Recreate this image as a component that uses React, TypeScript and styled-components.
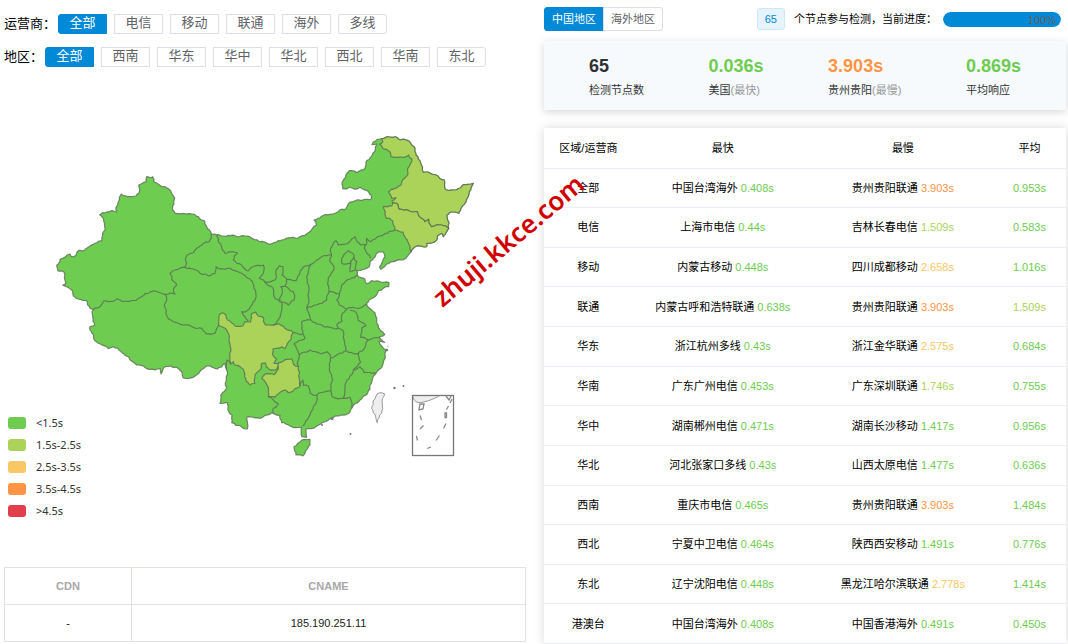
import React, { useState } from "react";
import styled, { createGlobalStyle } from "styled-components";

const GREEN = "#6ecc51";
const LIME = "#abd35a";
const YELLOW = "#f9c766";
const ORANGE = "#ff9544";
const RED = "#e13f4c";
const BLUE = "#0089d6";

const GlobalStyle = createGlobalStyle`
  * { box-sizing: border-box; }
  body {
    margin: 0;
    background: #fff;
    color: #111;
    font: 11px/16px "Liberation Sans", "Noto Sans CJK SC", sans-serif;
  }
  button { font-family: inherit; cursor: pointer; }
`;

const Page = styled.main`
  position: relative;
  display: grid;
  grid-template-columns: minmax(0, 1fr) minmax(0, 1fr);
  gap: 18px;
  padding: 0 2px 0 4px;
  overflow: hidden;
`;

const Column = styled.section`
  display: flex;
  flex-direction: column;
  min-width: 0;
`;

/* ---------- filters ---------- */

const Filters = styled.div`
  display: flex;
  flex-direction: column;
  gap: 13px;
  padding-top: 14px;
`;

const FilterRow = styled.div`
  display: flex;
  align-items: center;
  height: 20px;
`;

const FilterLabel = styled.span`
  margin-right: 2px;
  font-size: 13px;
  line-height: 20px;
  color: #000;
`;

const FilterOptions = styled.div`
  display: flex;
  gap: 7px;
`;

const FilterButton = styled.button<{ $active: boolean }>`
  width: 49px;
  height: 20px;
  padding: 0 0 3px;
  border: 1px solid ${(p) => (p.$active ? BLUE : "#dcdfe6")};
  background: ${(p) => (p.$active ? BLUE : "#fff")};
  color: ${(p) => (p.$active ? "#fff" : "#606266")};
  font-size: 13px;
  line-height: 15px;
  &:first-child { border-radius: 3px 0 0 3px; }
  &:last-child { border-radius: 0 3px 3px 0; }
`;

function Filter({ label, options }: { label: string; options: string[] }) {
  const [active, setActive] = useState(options[0]);
  return (
    <FilterRow role="group" aria-label={label}>
      <FilterLabel>{label}：</FilterLabel>
      <FilterOptions>
        {options.map((o) => (
          <FilterButton key={o} type="button" $active={o === active} onClick={() => setActive(o)}>
            {o}
          </FilterButton>
        ))}
      </FilterOptions>
    </FilterRow>
  );
}

/* ---------- map ---------- */

type Point = [number, number];

const parse = (s: string): Point[] => s.trim().split(/\s+/).map((p) => p.split(",").map(Number) as Point);

// Adds small bends to an edge; the result is the same in either direction,
// so neighbouring provinces keep a common border.
function bends(a: Point, b: Point, depth: number): Point[] {
  const len = Math.hypot(b[0] - a[0], b[1] - a[1]);
  if (depth === 0 || len < 3) return [b];
  const seed = Math.sin((a[0] + b[0]) * 12.9898 + (a[1] + b[1]) * 78.233) * 43758.5453;
  const r = seed - Math.floor(seed) - 0.5;
  const dir = a[0] < b[0] || (a[0] === b[0] && a[1] < b[1]) ? 1 : -1;
  const k = (dir * r * Math.min(2.4, len * 0.3)) / len;
  const m: Point = [(a[0] + b[0]) / 2 - (b[1] - a[1]) * k, (a[1] + b[1]) / 2 + (b[0] - a[0]) * k];
  return [...bends(a, m, depth - 1), ...bends(m, b, depth - 1)];
}

function trace(s: string, closed = false) {
  const pts = parse(s);
  if (closed) pts.push(pts[0]);
  const out: Point[] = [pts[0]];
  for (let i = 1; i < pts.length; i++) out.push(...bends(pts[i - 1], pts[i], 3));
  return "M" + out.map(([x, y]) => `${x.toFixed(1)} ${y.toFixed(1)}`).join("L") + (closed ? "Z" : "");
}

const NORTH_EAST =
  "381.7,138.7 395,136.7 400.7,140 409.3,141.3 415,148.3 416,155 423.3,172.3 436,175 444.3,180 445.3,189.3 456.7,190 463.3,184.7 473.3,183.3 469.3,191.7 466,201.7 458.7,213.3 453.3,212 446.7,215.3 448.7,228.7";
const JILIN_COAST =
  "448.7,228.7 446.7,231.7 443.3,236.7 441.7,233.3 437.3,236 436.7,240 426.7,243.3 426.7,246.7 417.3,245.7 410.7,252.3";

const MAINLAND = `
  93.3,310 90,308.3 86.7,300.7 80,299.3 73.3,296 72.7,290.7 66.7,286.7 62.7,285.3 66,283.3 64,272 58,271 56.7,265.3
  60,259.3 70,254 71.3,256.7 76,255.3 78.7,250.3 84.7,250 96.7,242.7 102,240.7 102.7,235.3 105.3,229.3 103.3,218.3
  99.7,214.7 112.7,210.7 116.7,212 116,207.3 121.3,194 125,195.7 136,196 138.7,193.3 138.7,185 146,182 146.7,176.7
  152.7,176.7 154,182 161.7,186.7 168.7,189 174.7,198 172.7,210 174.7,212.7 191.7,214 204.7,221 206.7,226.7 211.3,234
  216.7,234.7 230,235.7 246.7,236 260,241.7 269.3,244.3 281.7,240 300,236.7 308.3,232.7 316.7,225.3 314,220 330,214.3
  346,208.7 350,202.3 356.7,200 371.3,199 368.7,192 360,187.3 355,189.3 350,187.3 342.7,188.7 342,184 349.3,170.7
  356.7,172.7 365.3,168 366,161.7 375.3,150 376.7,144 372,144.7 373.3,142 ${NORTH_EAST} ${JILIN_COAST}
  401.7,260 391.7,261.7 380.7,269.3 379.5,267 385,256.7 383.3,252 378.3,252 375,257 370,261.7 369.3,266.7 356.7,270
  357.3,275 365,279.3 366.7,284 371.7,280.7 378.3,281 389,282.7 388.7,286.7 378.3,290.7 366.7,303.3 368.3,307.3
  375,312.7 376.7,318 380,330 384.7,334.3 379.3,337.3 384.7,342.3 379,341 386,350 385.3,356 382.7,365 376,373.3
  370,389.3 360,400 351.7,408.3 347.3,414 331.7,418.3 316.7,426 306,429 306.7,437.3 302,436.7 301.7,427.3 290,426
  281.7,422.7 280,415 271.7,412.7 263.3,416.7 246.7,417.3 247.3,429 240.7,426 231.7,422.7 232,415 228,410 227.3,402.7
  220,403.3 220.7,395 226.7,387.3 226.7,370 225,363.3 217.3,369 206.7,366 193.3,377.3 183.3,378 181.7,371.7
  176.7,367.3 165,366.7 161,374 160,368.3 150,369.3 136.7,365 128.3,356.7 113.3,346.7 108.3,348.7 94,339.3 90,326.7
  94.7,325.3 92.7,316.7 92,311.7`;

const HEILONGJIANG = `${NORTH_EAST} 441.7,225 436.7,224.7 431.3,226.7 428.7,219.3 424.7,221.7 420,217.3 417.3,211.7
  399.3,209.3 396.7,203.3 392.7,202.7 392,200.7 396,197.7 391.7,198.3 388.3,192 401,185 401.7,182.7 408,174
  407.7,168.3 412,159.3 408.7,155 404,157.3 391,156.7 390,151.7 382.7,148 379.3,144 382.7,142`;

const JILIN = `${JILIN_COAST} 407.3,240 403.3,232 395,230 392.7,220.7 386.7,218.3 383.3,206.7 391.7,206 392.7,202.7
  396.7,203.3 399.3,209.3 417.3,211.7 420,217.3 424.7,221.7 428.7,219.3 431.3,226.7 436.7,224.7 441.7,225`;

const SICHUAN = `222.7,312.7 226,315 227.3,320 235,326 242.7,326 245,321.7 250.7,322 252,313.3 255.7,312 258.3,316
  263.3,317.3 265.3,325 276.7,324 293.3,332.7 287.3,343.3 285,348.3 281.7,346.7 273.3,348.7 272.7,355 276.7,359.3
  274,363.3 278.7,364 275,370 268.3,368.3 265,362.7 261.7,363.3 259.3,370.7 255,376 255,383.3 250,385 246,380
  241.7,368.3 235,365 233.3,361.7 230.7,364 229.3,336.7 225,328.3 218.7,325 219.3,315`;

const GUIZHOU = `278.7,362.7 286.7,359.3 291.7,358.7 293.3,364 298.3,366.7 299.3,378.3 300,386 293.3,390.7 288.3,392.7
  285,390 278.3,394 275,397.3 268.3,396.7 268.3,387.3 261.7,378.3 265,374 274,374.7 278.3,369.3`;

const HAINAN = "301.7,440 310,439.3 310,445 302.7,456 296,455 294,446.7";
const TAIWAN = "379.3,392.7 384.7,394 381.7,413.3 377.3,422.7 375.5,416 371.7,408.3 373,401";

const BORDERS = [
  "93.3,310 99.3,307.3 103.3,301 113.3,301.3 117.3,298.7 122.7,301.7 140,297.7 145,293.3 156.7,291.3 165,294.3",
  "165,294.3 175,294.3 173.3,289.3 176.7,285 172,280 170,273.3 184.7,267.3 187.3,255 193.3,252.7 196.7,248.3 209.3,241.7 211.3,234",
  "184.7,267.3 193.3,269 200,273.3 210,276 215,273.3 216,266.7 223.3,269 230,268 240,272.7 252.7,281.7 256,295 249.3,309.3 241.7,311.7 245,316.7 248.3,321",
  "165,294.3 166.7,298.3 165,303.3 167.3,316.7 178.3,323.3 193.3,327.3 201.7,328.3 206.7,334 215,333.3 218.7,325",
  "230.7,364 227,360 226.7,370",
  "216.7,235 218.3,241.7 221.7,246.7 225,253.3 233.3,251.7 237.3,252.7 233.3,260 241.7,265 248.3,271 251.7,267.3 263.3,265 264,270 259.3,278.3 265,282.3 275,280 276,270 279.3,265.7 282.7,266.7 282,275 286.7,279.3 296,280.7 300,271.7 305,266 311,264.3 318.3,259.3 321.7,256.7 331.7,255",
  "286.7,279.3 285,286 280.7,286.7 282,294 279.3,298.3 280,301.7 275,298.3 271.7,286.7 265,282.3",
  "285,286 293.3,291.7 294,300 288.3,305 280.7,301.7 281,313.3 278.3,320 273.3,325",
  "311,264.3 306.7,276.7 309,288.3 306.7,308.3 310,318.3 321.7,325 338.3,328.3 343.3,331 345,345 346,350.7",
  "331.7,255 330,261.7 334,266.7 328.3,280 329,291.7 326.7,300 306.7,308.3",
  "331.7,255 330.7,248.3 336,240.7 338.3,245 350,241.7 355,236.7 360.7,245 366,245 366.7,238.3 370.7,241.7 380,236 395,230",
  "366,245 364.3,248 370.7,258.3",
  "341.7,258.3 348.3,250.7 354,255 352.7,259.3 350,263.3 341.7,263.3 341.7,258.3",
  "354,257.3 356.7,261.7 355.3,270 350,271.7 350.7,261.7",
  "357.3,275 350,279 341.7,285 339.3,294 336.7,300 339.3,305 346.7,309.3 353.3,307.3 361.7,307.3 366.7,304",
  "329,291.7 339.3,294",
  "346.7,309.3 341.7,315 342,321 336.7,325 338.3,328.3",
  "350,310 356.7,313.3 358,320 363.3,323 366,326 361.7,328.3 360.7,337.3 368.3,340 379.3,337.3",
  "368.3,340 363.3,350 358.3,353.3 351.7,352.7 346,350.7 338.3,354 330.7,358.3 327.3,351.7 320,353.3 310,350 299.3,355 298.3,366.7",
  "310,320 301.7,321.7 301.7,328.3 303,334 305,338.3 294,344 298.3,351.7 299.3,355",
  "293.3,332.7 303,334",
  "330.7,358.3 329.3,370 332.7,380 330.7,390.7 325,391.7 316.7,395 310,393.3 308.3,386 303.3,385.3 302.7,380 300,386",
  "316.7,395 316,403.3 310,415 302.7,426",
  "330.7,390.7 333.3,397.3 343.3,398.3 350,397.3 351.7,408.3",
  "343.3,398.3 345,386.7 353.3,370 360.7,362 358.3,353.3",
  "353.3,370 360,366.7 364,372.7 371.7,373.3 376,373.3",
  "268.3,396.7 278.3,404 273.3,408.3 273.3,413",
];

const SEA_MARKS = [
  "M420 404l4 0l-1 5l-4 1z",
  "M420 415.500l1.500 4.500",
  "M420 429l3.500-3.500",
  "M416.500 436l1 4.500",
  "M427 448.500l4-1.500",
  "M436 440.500l3.500-5",
  "M443.500 428.500l2.500-5",
  "M445 413v4.500h1.500v-4.500z",
  "M446.500 409.500l2-3.500",
  "M450 403l2-4",
  "M446 396l3 4l2-4",
];

const MapArea = styled.div`
  position: relative;
`;

const MapDrawing = styled.svg`
  display: block;
  width: 100%;
  height: auto;
`;

const Legend = styled.ul`
  position: absolute;
  left: 4px;
  bottom: 45px;
  margin: 0;
  padding: 0;
  list-style: none;
`;

const LegendItem = styled.li`
  display: flex;
  align-items: center;
  gap: 10px;
  color: #333;
  font: 11px/22px "Noto Sans", sans-serif;
`;

const Swatch = styled.i<{ $color: string }>`
  width: 18px;
  height: 12px;
  border-radius: 3px;
  background: ${(p) => p.$color};
`;

const legend: [string, string][] = [
  [GREEN, "<1.5s"],
  [LIME, "1.5s-2.5s"],
  [YELLOW, "2.5s-3.5s"],
  [ORANGE, "3.5s-4.5s"],
  [RED, ">4.5s"],
];

function ChinaMap() {
  return (
    <MapArea>
      <MapDrawing viewBox="4 67 522 500" role="img" aria-label="中国地区">
        <g stroke="#5a6e54" strokeOpacity="0.8" strokeWidth="1.200" strokeLinejoin="round">
          <path d={trace(MAINLAND, true)} fill={GREEN} />
          <path d={trace(HAINAN, true)} fill={GREEN} />
          {[HEILONGJIANG, JILIN, SICHUAN, GUIZHOU].map((shape, i) => (
            <path key={i} d={trace(shape, true)} fill={LIME} />
          ))}
          {BORDERS.map((line, i) => (
            <path key={i} d={trace(line)} fill="none" />
          ))}
        </g>
        <path d={trace(TAIWAN, true)} fill="#eee" stroke="#999" />
        <g fill="#777">
          <circle cx="394.500" cy="388" r="1.200" />
          <circle cx="403.500" cy="386" r="1" />
          <circle cx="350.500" cy="434" r="1" />
          <circle cx="332" cy="418.500" r="1.500" />
          <circle cx="322" cy="425" r="1" />
          <circle cx="387" cy="350" r="1.200" />
          <circle cx="388" cy="346" r="0.600" />
        </g>
        <path d="M412.500 395.500H440C434 399 424 403 418 402.500C415 402 413 399 412.500 395.500Z" fill="#eee" stroke="#999" />
        <rect x="412.500" y="395.500" width="41" height="60" fill="none" stroke="#777" strokeWidth="1.300" />
        <path d={SEA_MARKS.join("")} fill="none" stroke="#888" strokeWidth="1.300" />
      </MapDrawing>
      <Legend>
        {legend.map(([color, text]) => (
          <LegendItem key={text}>
            <Swatch $color={color} />
            {text}
          </LegendItem>
        ))}
      </Legend>
    </MapArea>
  );
}

/* ---------- CDN table ---------- */

const CdnTable = styled.table`
  width: 100%;
  border-collapse: collapse;
  table-layout: fixed;
  text-align: center;
  th, td {
    height: 37px;
    padding: 0;
    border: 1px solid #dfe2ea;
  }
  th { color: #a8a8a8; font-weight: bold; }
  td { color: #222; }
  th:first-child { width: 127px; }
`;

/* ---------- right column ---------- */

const Toolbar = styled.div`
  display: flex;
  align-items: center;
  padding: 7px 5px 0 0;
`;

const Tabs = styled.div`
  display: flex;
  margin-right: auto;
`;

const Tab = styled.button<{ $active: boolean }>`
  height: 24px;
  padding: 0 7px;
  border: 1px solid ${(p) => (p.$active ? BLUE : "#dcdfe6")};
  background: ${(p) => (p.$active ? BLUE : "#fff")};
  color: ${(p) => (p.$active ? "#fff" : "#606266")};
  font-size: 11px;
  line-height: 20px;
  &:first-child { border-radius: 3px 0 0 3px; }
  &:last-child { margin-left: -1px; border-radius: 0 3px 3px 0; }
`;

const Badge = styled.span`
  margin-right: 9px;
  padding: 0 7px;
  border: 1px solid #cce7f7;
  border-radius: 3px;
  background: #e6f3fb;
  color: ${BLUE};
  line-height: 20px;
`;

const ProgressLabel = styled.span`
  margin-right: 6px;
  color: #000;
`;

const ProgressTrack = styled.div`
  width: 118px;
  height: 15px;
  border-radius: 8px;
  background: #ebeef5;
  overflow: hidden;
`;

const ProgressFill = styled.div`
  height: 100%;
  padding-right: 5px;
  border-radius: 8px;
  background: ${BLUE};
  color: #606266;
  line-height: 16px;
  text-align: right;
`;

const StatsCard = styled.dl`
  display: flex;
  justify-content: space-between;
  margin: 10px 0 0;
  padding: 13px 45px 12px;
  background: #f6fafd;
  box-shadow: 0 2px 8px rgba(0, 0, 0, 0.16);
`;

const Stat = styled.div`
  display: flex;
  flex-direction: column-reverse;
`;

const StatValue = styled.dd<{ $color: string }>`
  margin: 0;
  color: ${(p) => p.$color};
  font-size: 18px;
  font-weight: bold;
  line-height: 24px;
`;

const StatName = styled.dt`
  padding-top: 4px;
  color: #333;
  span { color: #999; }
`;

const ResultTable = styled.table`
  width: 100%;
  height: 516px;
  margin-top: 18px;
  border-collapse: collapse;
  table-layout: fixed;
  text-align: center;
  color: #000;
  box-shadow: 0 0 10px rgba(0, 0, 0, 0.15);
  th, td {
    padding: 0;
    border-bottom: 1px solid #ebeef5;
    font-weight: normal;
    white-space: nowrap;
  }
  th { height: 40px; }
  col:nth-child(1) { width: 17%; }
  col:nth-child(4) { width: 14%; }
`;

const Time = styled.span<{ $value: number }>`
  color: ${({ $value: v }) => (v < 1.5 ? GREEN : v < 2.5 && v !== 1.5 ? LIME : v < 3.5 ? YELLOW : ORANGE)};
`;

const Watermark = styled.div`
  position: absolute;
  left: 445px;
  top: 283px;
  transform: rotate(-40deg);
  transform-origin: 0 100%;
  color: #d10000;
  font: 600 26px/28px "Noto Sans", sans-serif;
  pointer-events: none;
`;

type Row = [string, string, string, string, string, string];

const rows: Row[] = [
  ["全部", "中国台湾海外", "0.408", "贵州贵阳联通", "3.903", "0.953"],
  ["电信", "上海市电信", "0.44", "吉林长春电信", "1.509", "0.583"],
  ["移动", "内蒙古移动", "0.448", "四川成都移动", "2.658", "1.016"],
  ["联通", "内蒙古呼和浩特联通", "0.638", "贵州贵阳联通", "3.903", "1.509"],
  ["华东", "浙江杭州多线", "0.43", "浙江金华联通", "2.575", "0.684"],
  ["华南", "广东广州电信", "0.453", "广东深圳联通", "1.746", "0.755"],
  ["华中", "湖南郴州电信", "0.471", "湖南长沙移动", "1.417", "0.956"],
  ["华北", "河北张家口多线", "0.43", "山西太原电信", "1.477", "0.636"],
  ["西南", "重庆市电信", "0.465", "贵州贵阳联通", "3.903", "1.484"],
  ["西北", "宁夏中卫电信", "0.464", "陕西西安移动", "1.491", "0.776"],
  ["东北", "辽宁沈阳电信", "0.448", "黑龙江哈尔滨联通", "2.778", "1.414"],
  ["港澳台", "中国台湾海外", "0.408", "中国香港海外", "0.491", "0.450"],
];

const Seconds = ({ value }: { value: string }) => <Time $value={Number(value)}>{value}s</Time>;

export default function App() {
  const [tab, setTab] = useState("中国地区");
  const progress = 100;
  return (
    <Page>
      <GlobalStyle />
      <Column>
        <Filters>
          <Filter label="运营商" options={["全部", "电信", "移动", "联通", "海外", "多线"]} />
          <Filter label="地区" options={["全部", "西南", "华东", "华中", "华北", "西北", "华南", "东北"]} />
        </Filters>
        <ChinaMap />
        <CdnTable>
          <thead>
            <tr><th scope="col">CDN</th><th scope="col">CNAME</th></tr>
          </thead>
          <tbody>
            <tr><td>-</td><td>185.190.251.11</td></tr>
          </tbody>
        </CdnTable>
      </Column>

      <Column>
        <Toolbar>
          <Tabs>
            {["中国地区", "海外地区"].map((t) => (
              <Tab key={t} type="button" $active={t === tab} onClick={() => setTab(t)}>{t}</Tab>
            ))}
          </Tabs>
          <Badge>65</Badge>
          <ProgressLabel id="progress-label">个节点参与检测，当前进度：</ProgressLabel>
          <ProgressTrack role="progressbar" aria-labelledby="progress-label" aria-valuenow={progress}>
            <ProgressFill style={{ width: `${progress}%` }}>{progress}%</ProgressFill>
          </ProgressTrack>
        </Toolbar>
        <StatsCard>
          <Stat>
            <StatName>检测节点数</StatName>
            <StatValue $color="#303133">65</StatValue>
          </Stat>
          <Stat>
            <StatName>美国<span>(最快)</span></StatName>
            <StatValue $color={GREEN}>0.036s</StatValue>
          </Stat>
          <Stat>
            <StatName>贵州贵阳<span>(最慢)</span></StatName>
            <StatValue $color={ORANGE}>3.903s</StatValue>
          </Stat>
          <Stat>
            <StatName>平均响应</StatName>
            <StatValue $color={GREEN}>0.869s</StatValue>
          </Stat>
        </StatsCard>
        <ResultTable>
          <colgroup><col /><col /><col /><col /></colgroup>
          <thead>
            <tr>
              <th scope="col">区域/运营商</th>
              <th scope="col">最快</th>
              <th scope="col">最慢</th>
              <th scope="col">平均</th>
            </tr>
          </thead>
          <tbody>
            {rows.map(([area, fast, fastTime, slow, slowTime, avg]) => (
              <tr key={area}>
                <td>{area}</td>
                <td>{fast} <Seconds value={fastTime} /></td>
                <td>{slow} <Seconds value={slowTime} /></td>
                <td><Seconds value={avg} /></td>
              </tr>
            ))}
          </tbody>
        </ResultTable>
      </Column>
      <Watermark>zhuji.kkce.com</Watermark>
    </Page>
  );
}
